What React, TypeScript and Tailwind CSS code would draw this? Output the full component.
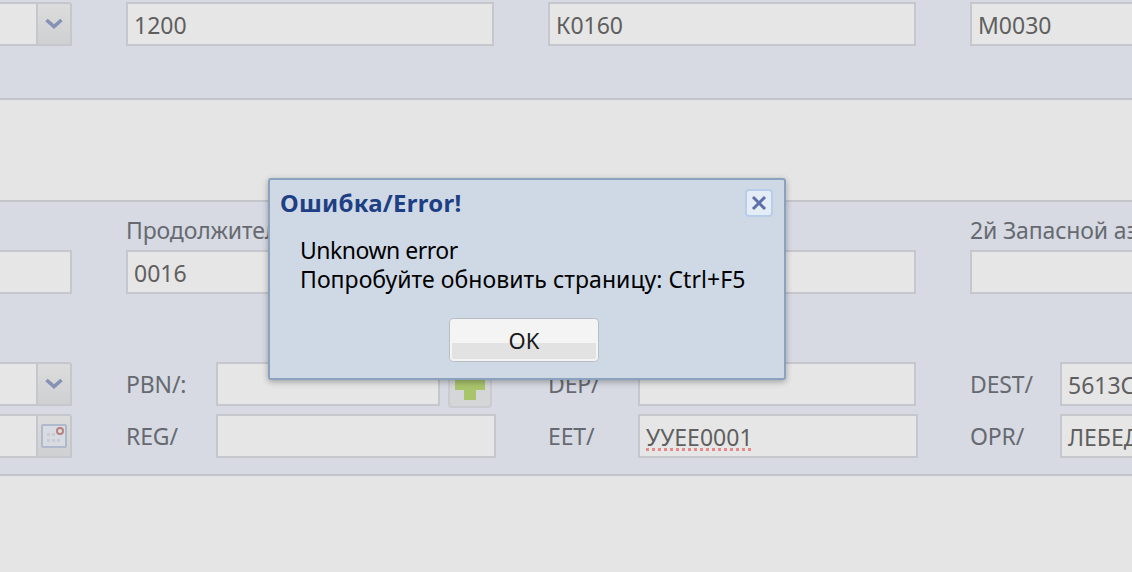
import { ReactNode } from "react";

const font = "font-['Noto_Sans','Open_Sans',sans-serif]";

function Field({ className = "", children }: { className?: string; children?: ReactNode }) {
  return (
    <div
      className={`flex h-[44px] shrink-0 items-center overflow-hidden whitespace-nowrap border-2 border-[#c5c7cd] bg-[#e6e6e6] pl-[6px] pt-[2px] text-[23px] text-[#5f5f5f] ${className}`}
    >
      {children}
    </div>
  );
}

function Label({ className = "", children }: { className?: string; children: ReactNode }) {
  return <div className={`shrink-0 whitespace-nowrap text-[23px] leading-[28px] tracking-[-0.15px] text-[#666a70] ${className}`}>{children}</div>;
}

function SideButton({ children }: { children: ReactNode }) {
  return (
    <div className="flex h-[44px] w-[36px] shrink-0 items-center justify-center rounded-tr-[3px] border-2 border-[#c5c7cd] bg-[linear-gradient(#dcdcdc,#cfd0d2)]">
      {children}
    </div>
  );
}

function Chevron() {
  return (
    <svg width="20" height="12" viewBox="0 0 20 12">
      <path d="M2.5 2 L10 8.5 L17.5 2" fill="none" stroke="#8592b5" strokeWidth="3.6" />
    </svg>
  );
}

function CalendarIcon() {
  return (
    <svg width="26" height="26" viewBox="0 0 26 26">
      <rect x="1" y="2" width="24" height="22" rx="1" fill="#d9dbe2" stroke="#b0b8cc" strokeWidth="2" />
      <path d="M6 10 h3 v3 h-3 z M11 10 h3 v3 h-3 z M6 16 h3 v3 h-3 z M11 16 h3 v3 h-3 z M16 16 h3 v3 h-3 z" fill="#c9ccd4" />
      <circle cx="19" cy="8" r="3" fill="#e0e0e0" stroke="#b5807e" strokeWidth="2" />
    </svg>
  );
}

function SelectField() {
  return (
    <div className="flex w-[72px] shrink-0">
      <Field className="w-[36px] border-x-0" />
      <SideButton>
        <Chevron />
      </SideButton>
    </div>
  );
}

function DateField() {
  return (
    <div className="flex w-[72px] shrink-0">
      <Field className="w-[36px] border-x-0" />
      <SideButton>
        <CalendarIcon />
      </SideButton>
    </div>
  );
}

export default function App() {
  return (
    <div className={`relative h-[572px] w-[1132px] overflow-hidden bg-[#e5e5e5] ${font}`}>
      {/* Top panel */}
      <div className="flex h-[100px] gap-[54px] border-b-2 border-[#c3c5cb] bg-[#d7dae3] pt-[2px]">
        <SelectField />
        <Field className="w-[368px]">1200</Field>
        <Field className="w-[368px]">К0160</Field>
        <Field className="w-[368px]">М0030</Field>
      </div>

      {/* Second panel */}
      <div className="mt-[100px] h-[276px] border-y-2 border-[#c3c5cb] bg-[#d7dae3]">
        <div className="flex gap-[54px] pt-[14px]">
          <div className="w-[72px] shrink-0 pt-[34px]">
            <Field className="w-[72px] border-l-0" />
          </div>
          <div className="w-[368px] shrink-0">
            <Label className="mb-[6px]">Продолжительность</Label>
            <Field className="w-[368px]">0016</Field>
          </div>
          <div className="w-[368px] shrink-0">
            <Label className="mb-[6px]">&nbsp;</Label>
            <Field className="w-[368px]" />
          </div>
          <div className="w-[368px] shrink-0">
            <Label className="mb-[6px]">2й Запасной аэродром</Label>
            <Field className="w-[368px]" />
          </div>
        </div>

        <div className="mt-[68px] flex flex-col gap-[8px]">
          <div className="flex h-[44px] gap-[54px]">
            <SelectField />
            <div className="flex w-[368px] shrink-0 items-start">
              <Label className="w-[90px] pt-[8px]">PBN/:</Label>
              <Field className="w-[224px]" />
              <div className="ml-[8px] flex h-[46px] w-[44px] shrink-0 items-center justify-center rounded-[4px] border-2 border-[#c9cbd0] bg-[#d5d6d8]">
                <svg width="34" height="34" viewBox="0 0 34 34">
                  <path d="M11 2 h12 v10 h9 v10 h-9 v10 h-12 v-10 h-9 v-10 h9 z" fill="#a9c56c" />
                </svg>
              </div>
            </div>
            <div className="flex w-[368px] shrink-0 items-start">
              <Label className="w-[90px] pt-[8px]">DEP/</Label>
              <Field className="w-[278px]" />
            </div>
            <div className="flex w-[368px] shrink-0 items-start">
              <Label className="w-[90px] pt-[8px]">DEST/</Label>
              <Field className="w-[278px]">5613С</Field>
            </div>
          </div>
          <div className="flex h-[44px] gap-[54px]">
            <DateField />
            <div className="flex w-[368px] shrink-0 items-start">
              <Label className="w-[90px] pt-[8px]">REG/</Label>
              <Field className="w-[280px]" />
            </div>
            <div className="flex w-[368px] shrink-0 items-start">
              <Label className="w-[90px] pt-[8px]">EET/</Label>
              <Field className="w-[280px]">
                <span className="underline decoration-[#e58b8b] decoration-dotted decoration-[3px] underline-offset-[2px]">УУЕЕ0001</span>
              </Field>
            </div>
            <div className="flex w-[368px] shrink-0 items-start">
              <Label className="w-[90px] pt-[8px]">OPR/</Label>
              <Field className="w-[278px]">ЛЕБЕДЕВ</Field>
            </div>
          </div>
        </div>
      </div>

      {/* Error dialog */}
      <div className="absolute left-[268px] top-[178px] flex h-[202px] w-[518px] flex-col rounded-[3px] border-2 border-[#8ba2be] bg-[#cfd9e6] shadow-[0_2px_6px_rgba(0,0,0,0.3)]">
        <div className="flex h-[48px] items-start justify-between pl-[10px] pr-[11px] pt-[9px]">
          <div className="text-[24px] font-bold leading-[28px] tracking-[0.25px] text-[#1f3f85]">Ошибка/Error!</div>
          <div className="flex h-[28px] w-[28px] items-center justify-center rounded-[4px] border-2 border-[#b8cdea] bg-[#e4ecf6]">
            <svg width="18" height="18" viewBox="0 0 18 18">
              <path d="M3 3 L15 15 M15 3 L3 15" stroke="#5d6fa8" strokeWidth="3" />
            </svg>
          </div>
        </div>
        <div className="pl-[30px] pt-[8px] text-[23px] leading-[28.5px] text-black">
          <div className="tracking-[-0.5px]">Unknown error</div>
          <div className="tracking-[0.05px]">Попробуйте обновить страницу: Ctrl+F5</div>
        </div>
        <div className="flex justify-center pr-[6px] pt-[26px]">
          <div className="flex h-[42px] w-[148px] items-center justify-center rounded-[4px] border-2 border-[#f4f4f4] bg-[linear-gradient(#f4f4f4_0%,#f4f4f4_58%,#e2e2e2_58%,#e2e2e2_100%)] text-[22px] text-[#1a1a1a] shadow-[0_0_0_1px_#b9bcc2]">
            OK
          </div>
        </div>
      </div>
    </div>
  );
}
